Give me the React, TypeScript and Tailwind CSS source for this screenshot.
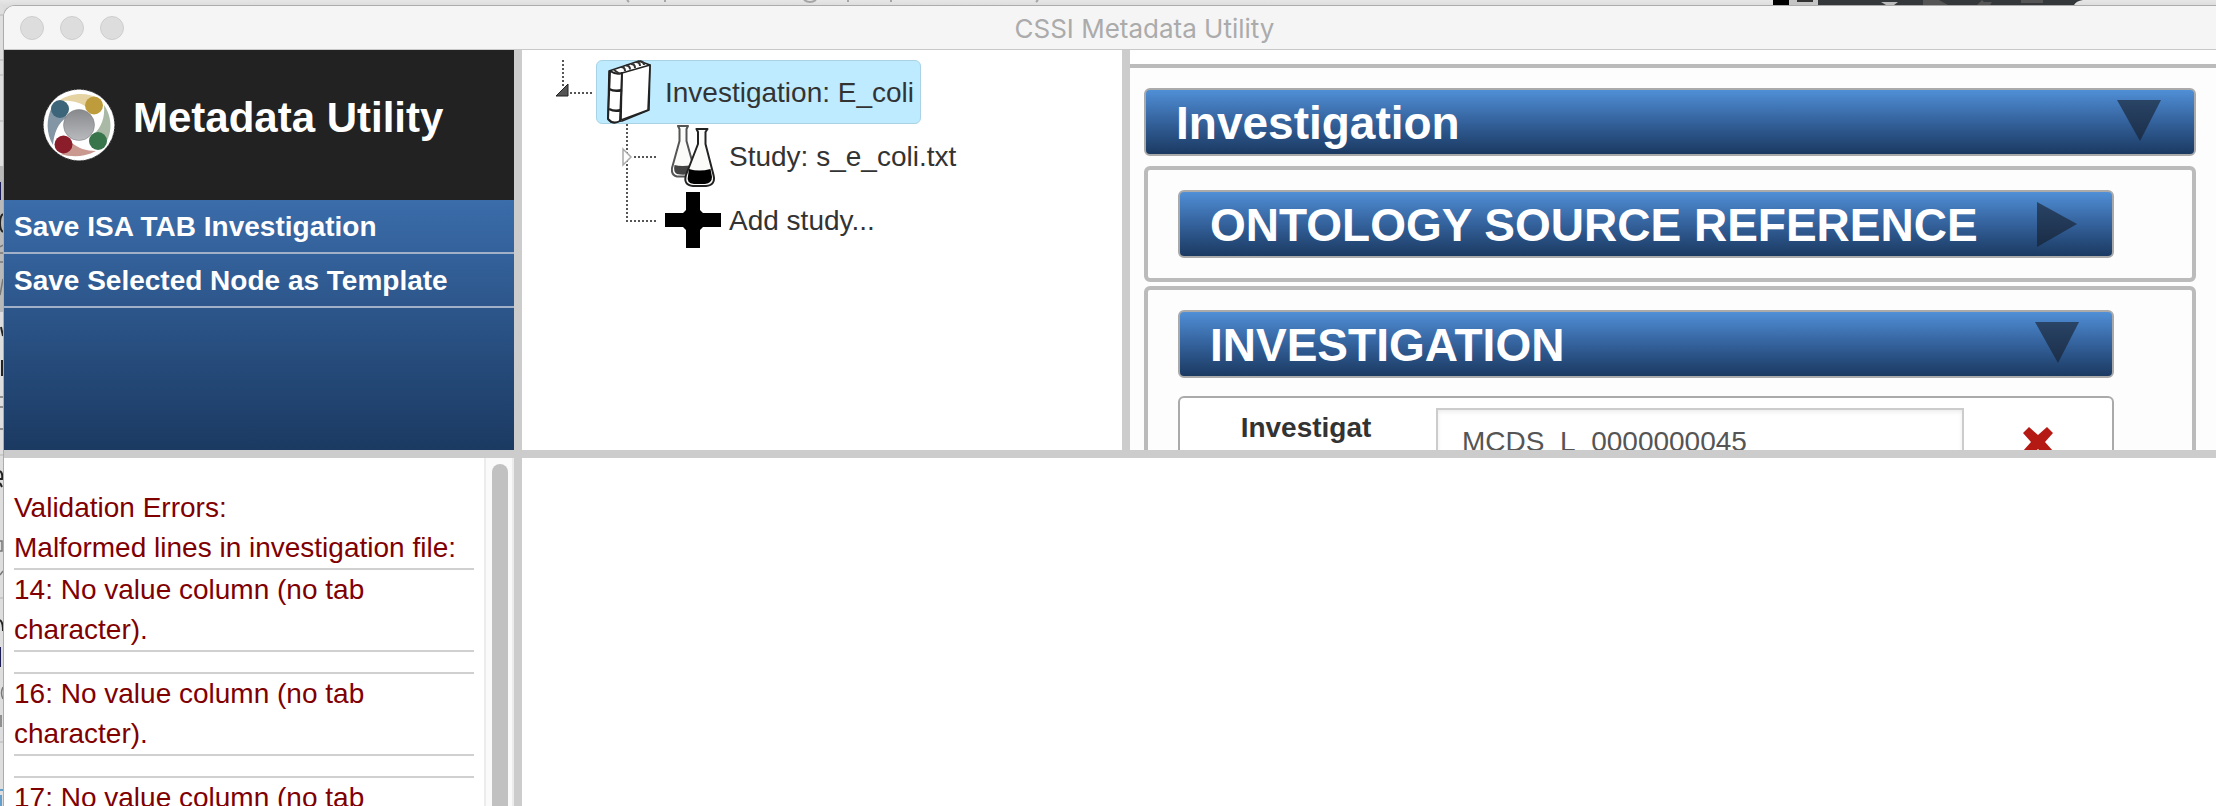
import React from "react";

const errors = [14, 16, 17];

function Logo() {
  return (
    <svg viewBox="0 0 72 72" className="h-[72px] w-[72px] flex-none" aria-hidden="true">
      <defs>
        <linearGradient id="core" x1="0" y1="0" x2="0" y2="1">
          <stop offset="0" stopColor="#88898d" />
          <stop offset="1" stopColor="#b9babe" />
        </linearGradient>
      </defs>
      <circle cx="36" cy="36" r="35.5" fill="#fff" />
      <circle cx="36" cy="36" r="35.5" fill="none" stroke="#999" strokeWidth="1" strokeDasharray="1 2" />
      <path d="M16 12 C28 3 46 3 58 11 L46 20 C38 13 28 11 16 12Z" fill="#e6d3a3" />
      <path d="M61 16 C70 29 69 45 62 55 L50 46 C59 38 62 28 61 16Z" fill="#a9b9a6" />
      <path d="M53 62 C40 69 27 68 18 65 L29 54 C35 59 43 62 53 62Z" fill="#c99990" />
      <path d="M10 56 C3 44 3 30 9 18 L24 28 C15 34 11 44 10 56Z" fill="#8296a5" />
      <circle cx="36" cy="36" r="15.5" fill="url(#core)" stroke="#77787c" strokeWidth="0.5" />
      <circle cx="17" cy="20" r="9" fill="#3d6579" />
      <circle cx="51" cy="16.5" r="9" fill="#bf9c3b" />
      <circle cx="55" cy="52" r="9" fill="#38754a" />
      <circle cx="20.5" cy="55.5" r="9" fill="#8b1d2b" />
    </svg>
  );
}

function BookIcon() {
  return (
    <svg viewBox="0 0 44 64" className="h-16 w-11" fill="#fff" stroke="#222" strokeWidth="1.6" strokeLinejoin="round" aria-hidden="true">
      <path d="M2 11 L32 1 L43 5 L42 50 L15 61 L4 62 L1 58Z" />
      <path d="M15 13 L43 5 L41 50 L14 60Z" />
      <path d="M3 11 Q9 15 15 13 L13 61 Q6 65 1 59Z" strokeWidth="2" />
      <path d="M2 29 Q8 32 15 30 M2 49 Q8 52 14 50" fill="none" strokeWidth="2.4" />
      <path d="M7 10 l6 4 M14 7 q4 0 4 4 M19 5.5 q4 0 4 4 M24 4 q4 0 4 4 M29 2 q4 0 4 4 M33 1 q4 1 4 4" fill="none" stroke="#333" strokeWidth="2" />
    </svg>
  );
}

function FlasksIcon() {
  return (
    <svg viewBox="0 0 44 64" className="h-16 w-11" strokeLinejoin="round" aria-hidden="true">
      <path d="M7 2 H17 L15.5 5 V17 L23 44 Q24 52 16 52.5 H6 Q0 51 1 44 L8.500 17 V5Z" fill="#fbfbfa" stroke="#555" strokeWidth="2" />
      <path d="M3.500 41 Q11 43 21 41 L21 49 Q14 52 6 50 Q2 48 3.500 41Z" fill="#444" />
      <path d="M25.500 5 H36.500 L34.500 8 V20 L42.500 51 Q45 61 35 62 H22 Q12 61 15 51 L27 20 V8Z" fill="#fbfbfa" stroke="#222" strokeWidth="2" />
      <path d="M18 45 Q28 48 39.500 45 L41 53 Q41 59 34 60 H23 Q15 59 17 52Z" fill="#000" />
    </svg>
  );
}

function PlusIcon() {
  return (
    <svg viewBox="0 0 58 58" className="h-[58px] w-[58px]" aria-hidden="true">
      <path d="M22 1 H36 V19 L39 22 H57 V36 H39 L36 39 V57 H22 V39 L19 36 H1 V22 H19 L22 19Z" fill="#000" />
    </svg>
  );
}

const dots = { stroke: "#555", strokeWidth: 2, strokeDasharray: "2 2", fill: "none" };

function TreeItem({ connector, icon, label, selected }: { connector: React.ReactNode; icon: React.ReactNode; label: string; selected?: boolean }) {
  return (
    <li className="flex h-16">
      {connector}
      <button
        type="button"
        className={
          selected
            ? "flex h-16 items-center gap-1 rounded-md border border-[#a9d3e4] bg-[#beebff] pr-1.5"
            : "flex h-16 items-center gap-1 border border-transparent pr-1.5"
        }
      >
        <span className="flex w-16 justify-center">{icon}</span>
        <span className="pt-0.5 whitespace-nowrap">{label}</span>
      </button>
    </li>
  );
}

function SectionBar({ title, open }: { title: string; open: boolean }) {
  return (
    <button
      type="button"
      aria-expanded={open}
      className="flex h-[68px] w-full items-center justify-between rounded-md border-2 border-[#aaa] bg-linear-to-b from-[#508fd6] via-[#34629c] to-[#1b3a62] pr-8 pl-[30px] text-[46px] font-bold text-white"
    >
      <span className="pt-0.5 leading-[60px] whitespace-nowrap">{title}</span>
      <svg viewBox="0 0 46 46" className="h-[46px] w-[46px] flex-none" aria-hidden="true">
        <path d={open ? "M1 1 H45 L24 42Z" : "M3 1 V46 L43 23Z"} fill="#151c28" fillOpacity="0.6" />
      </svg>
    </button>
  );
}

function BackdropTop() {
  return (
    <div className="flex h-[5px] flex-none justify-between bg-linear-to-b from-[#e6e6e6] to-[#dedede] pr-[133px]">
      <svg viewBox="0 0 1100 5" className="h-[5px] w-[1100px]" stroke="#a5a5a5" strokeWidth="2" fill="none" aria-hidden="true">
        <path d="M627 0 l2 2 M665 0 v2 M804 0 q6 4 12 0 M848 0 v2 M891 0 v2 M1038 0 l-2 2" />
      </svg>
      <svg viewBox="0 0 310 5" className="h-[5px] w-[310px]" aria-hidden="true">
        <path d="M0 0 H16 V5 H0Z" fill="#000" />
        <path d="M16 0 H45 V5 H16Z" fill="#c4c4c4" />
        <path d="M24 0 H40 V2 H24Z" fill="#333" />
        <path d="M45 0 H310 Q303 1 301 5 H45Z" fill="#35383a" />
        <path d="M108 2 H125 L121 5 H113Z" fill="#bbb" />
        <path d="M150 0 H166 L175 5 H150Z M209 0 L204 5 H217 L219 2 H211Z M248 0 H270 V3 H248Z" fill="#555" />
      </svg>
    </div>
  );
}

function BackdropLeft() {
  return (
    <svg viewBox="0 0 3 801" className="h-[801px] w-[3px] flex-none" aria-hidden="true">
      <path d="M0 0 H3 V801 H0Z" fill="#dedede" />
      <path d="M0 161 H3 V307 H0Z" fill="#b9b9b9" />
      <path d="M0 10 H3 M0 55 H3 M0 70 H3 M0 116 H3 M0 450 H3 M0 593 H3 M0 737 H3" stroke="#b5b5b5" strokeWidth="1" />
      <path d="M0 177 H1 V195 H0Z M0 642 H1 V662 H0Z" fill="#1c1c55" />
      <path d="M3 209 Q0 211 0 218 Q0 225 3 227 M1 322 L3 331 M2 355 V371 M0 466 Q3 468 2 474 H0 M0 478 L2 482 M0 615 Q3 617 3 626" stroke="#222" strokeWidth="2" fill="none" />
      <path d="M0 242 L3 240 M0 248 H3 M0 257 H3 M3 274 L0 290 M0 392 H3 M0 402 H3 M0 424 H3 M0 536 H2 V546 H0 M0 570 L3 566 M3 682 Q0 688 3 694 M1 710 V722" stroke="#777" strokeWidth="1.500" fill="none" />
      <path d="M0 785 H3 M1 790 V801" stroke="#3b8ac4" strokeWidth="1.500" />
    </svg>
  );
}

export default function App() {
  return (
    <div className="flex h-screen flex-col overflow-hidden bg-[#dcdcdc] font-['Liberation_Sans',Arial,sans-serif] text-[28px] leading-10 text-[#333]">
      <BackdropTop />
      <div className="flex min-h-0 flex-1">
        <BackdropLeft />
        <main className="flex min-h-0 min-w-0 flex-1 flex-col overflow-hidden rounded-tl-xl border-t border-l border-[#acacac] bg-white">
          <header className="flex h-11 flex-none items-center border-b border-[#c8c8c8] bg-[#f5f5f5]">
            <div className="flex w-40 flex-none gap-4 pl-4">
              <button type="button" aria-label="Close" className="h-6 w-6 rounded-full border border-[#cecece] bg-[#dddddd]" />
              <button type="button" aria-label="Minimize" className="h-6 w-6 rounded-full border border-[#cecece] bg-[#dddddd]" />
              <button type="button" aria-label="Zoom" className="h-6 w-6 rounded-full border border-[#cecece] bg-[#dddddd]" />
            </div>
            <div className="flex-1 pt-0.5 pr-[91px] text-center font-['Inter',sans-serif] text-[26px] text-[#ababab]">CSSI Metadata Utility</div>
          </header>

          <div className="grid min-h-0 flex-1 grid-cols-[510px_8px_600px_8px_minmax(0,1fr)] grid-rows-[400px_8px_minmax(0,1fr)]">
            <nav className="flex flex-col bg-linear-to-b from-[#508fd6] via-[#34629c] to-[#1b3a62] font-bold text-white">
              <div className="flex h-[150px] flex-none items-start gap-[18px] bg-[#222] pt-[39px] pl-[39px]">
                <Logo />
                <h1 className="text-[42px] leading-[58px]">Metadata Utility</h1>
              </div>
              <a href="#save" className="h-[54px] border-b-2 border-[#a3b1c8] pl-2.5 leading-[54px]">Save ISA TAB Investigation</a>
              <a href="#template" className="h-[54px] border-b-2 border-[#a3b1c8] pl-2.5 leading-[54px]">Save Selected Node as Template</a>
            </nav>

            <div className="row-span-3 bg-[#ccc]" />

            <section className="overflow-hidden pt-2.5">
              <ul>
                <TreeItem
                  selected
                  label="Investigation: E_coli"
                  icon={<BookIcon />}
                  connector={
                    <svg viewBox="0 0 74 64" className="h-16 w-[74px] flex-none" aria-hidden="true">
                      <path d="M41 0 V26 M48 33 H72" {...dots} />
                      <path d="M34 36 L46 24 V36Z" fill="#555" stroke="#222" strokeWidth="1" />
                    </svg>
                  }
                />
                <TreeItem
                  label="Study: s_e_coli.txt"
                  icon={<FlasksIcon />}
                  connector={
                    <svg viewBox="0 0 138 64" className="h-16 w-[138px] flex-none" aria-hidden="true">
                      <path d="M105 0 V64 M112 33 H136" {...dots} />
                      <path d="M101 25 L109 33 L101 41Z" fill="#fff" stroke="#aaa" strokeWidth="1.500" />
                    </svg>
                  }
                />
                <TreeItem
                  label="Add study..."
                  icon={<PlusIcon />}
                  connector={
                    <svg viewBox="0 0 138 64" className="h-16 w-[138px] flex-none" aria-hidden="true">
                      <path d="M105 0 V32 M104 33 H136" {...dots} />
                    </svg>
                  }
                />
              </ul>
            </section>

            <div className="bg-[#ccc]" />

            <section className="overflow-hidden pt-3.5">
              <div className="border-t-4 border-[#bbb] bg-[#fdfdfd] pt-5 pr-5 pl-3.5">
                <SectionBar title="Investigation" open />
                <div className="mt-2.5 flex flex-col gap-1">
                  <div className="rounded-md border-4 border-[#bbb] py-5 pr-[78px] pl-[30px]">
                    <SectionBar title="ONTOLOGY SOURCE REFERENCE" open={false} />
                  </div>
                  <div className="rounded-md border-4 border-[#bbb] py-5 pr-[78px] pl-[30px]">
                    <SectionBar title="INVESTIGATION" open />
                    <div className="mt-[18px] flex rounded-md border-2 border-[#aaa] bg-white py-2.5">
                      <label htmlFor="identifier" className="w-64 flex-none pr-1 text-center font-bold">Investigat</label>
                      <input
                        id="identifier"
                        defaultValue="MCDS_L_0000000045"
                        className="h-[68px] min-w-0 flex-1 border-2 border-[#ccc] bg-white pl-6 text-[#555] shadow-[inset_0_2px_4px_rgba(0,0,0,0.08)]"
                      />
                      <div className="flex w-[148px] flex-none items-center justify-center">
                        <button type="button" aria-label="Remove">
                          <svg viewBox="0 0 30 30" className="h-[30px] w-[30px]" aria-hidden="true">
                            <path d="M6 0 L15 8 L24 0 L30 6 L22 15 L30 24 L24 30 L15 22 L6 30 L0 24 L8 15 L0 6Z" fill="#b41914" />
                          </svg>
                        </button>
                      </div>
                    </div>
                  </div>
                </div>
              </div>
            </section>

            <div className="bg-[#ccc]" />
            <div className="col-span-3 bg-[#ccc]" />

            <section className="flex overflow-hidden text-[#800000]">
              <div className="flex-1 px-2.5 pt-[30px]">
                <h2>Validation Errors:</h2>
                <p>Malformed lines in investigation file:</p>
                <ul className="flex flex-col gap-5">
                  {errors.map((line) => (
                    <li key={line} className="border-y-2 border-[#d0d0d0]">{`${line}: No value column (no tab character).`}</li>
                  ))}
                </ul>
              </div>
              <div className="w-[30px] flex-none border-x-2 border-[#ececec] bg-[#fafafa] px-1.5 pt-1.5">
                <div className="h-full w-4 rounded-t-full bg-[#c1c1c1]" />
              </div>
            </section>

            <div className="col-span-3 bg-white" />
          </div>
        </main>
      </div>
    </div>
  );
}
